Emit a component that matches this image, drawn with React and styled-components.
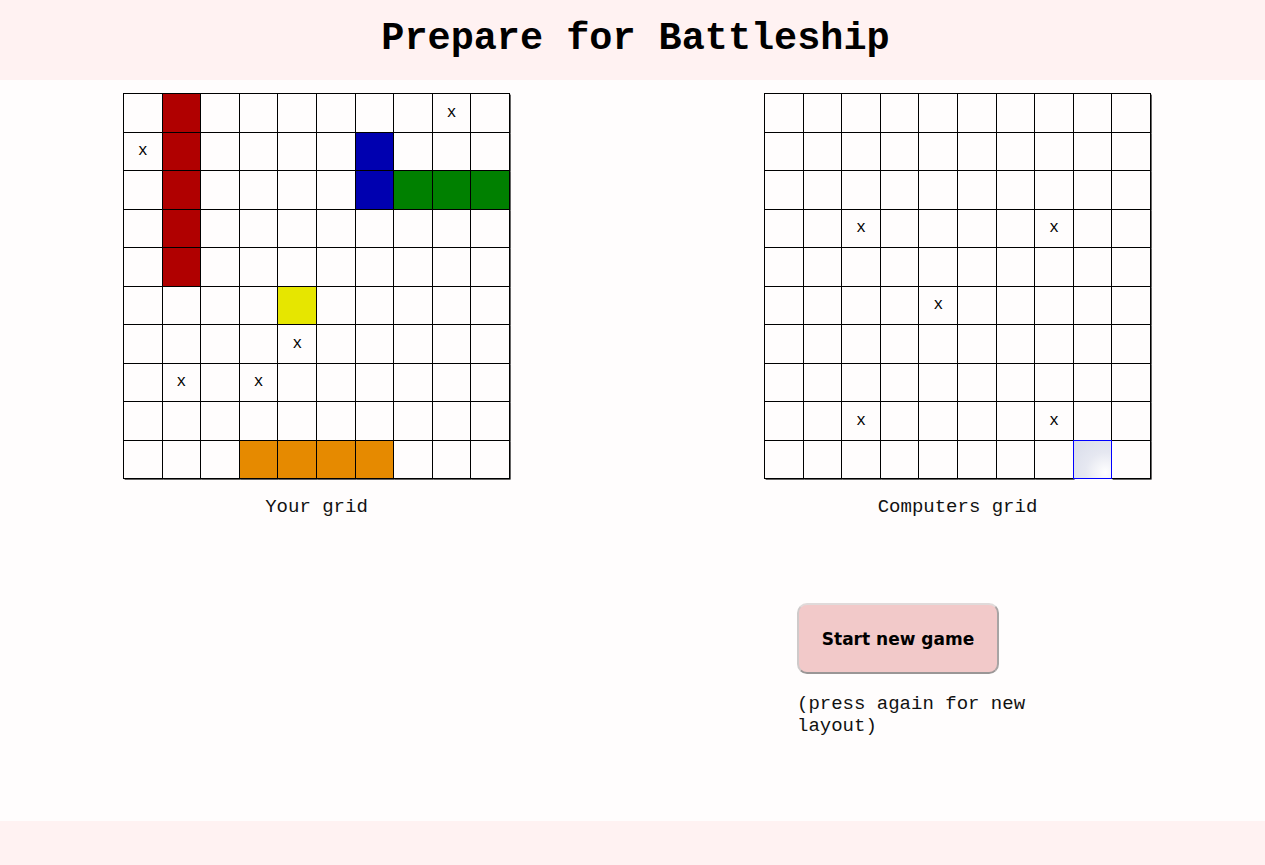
import React, { useState } from 'react';
import styled, { createGlobalStyle } from 'styled-components';

const GlobalStyle = createGlobalStyle`
  html, body {
    margin: 0;
    padding: 0;
    background: #fffdfd;
  }
`;

const Page = styled.div`
  min-height: 100vh;
  display: flex;
  flex-direction: column;
  font-family: 'Liberation Mono', 'Courier New', monospace;
  color: #111;
`;

const Header = styled.header`
  height: 80px;
  background: #fff2f2;
  display: flex;
  align-items: center;
  justify-content: center;
`;

const Title = styled.h1`
  margin: -3px 0 0 6px;
  font-size: 38.5px;
  font-weight: bold;
  color: #000;
`;

const Main = styled.main`
  flex: 1;
  display: flex;
  gap: 254px;
  padding: 13px 0 0 123px;
`;

const Column = styled.section`
  display: flex;
  flex-direction: column;
  width: 387px;
`;

const Board = styled.div`
  display: grid;
  grid-template-columns: repeat(10, 1fr);
  grid-template-rows: repeat(10, 1fr);
  width: 387px;
  height: 386px;
  border-top: 1px solid #000;
  border-left: 1px solid #000;
  box-sizing: border-box;
`;

const Cell = styled.div`
  border-right: 1px solid #000;
  border-bottom: 1px solid #000;
  box-shadow: 0.6px 0.6px 0 0 #000;
  background: ${(p) => p.$color || '#fffdfd'};
  display: flex;
  align-items: center;
  justify-content: center;
  font-size: 16px;
  color: #000;
  box-sizing: border-box;
  cursor: ${(p) => (p.$target ? 'pointer' : 'default')};
  ${(p) =>
    p.$hover &&
    `
    position: relative;
    z-index: 1;
    box-shadow: none;
    border: 1px solid #0000ff;
    margin: -1px 0 0 -1px;
    background: radial-gradient(circle at 85% 85%, #ffffff 0%, #e6e8f1 45%, #d8dcea 100%);
  `}
`;

const Caption = styled.p`
  margin: 17px 0 0;
  text-align: center;
  font-size: 19px;
  line-height: 22px;
`;

const Controls = styled.div`
  margin: 85px 0 0 33px;
  display: flex;
  flex-direction: column;
  align-items: flex-start;
`;

const StartButton = styled.button`
  width: 202px;
  height: 71px;
  background: #f2c9c9;
  border: 2px solid;
  border-color: #e0dada #a8a4a4 #9a9696 #cfcaca;
  border-radius: 10px;
  font-family: 'DejaVu Sans', Verdana, sans-serif;
  font-weight: bold;
  font-size: 17px;
  color: #000;
  cursor: pointer;
`;

const Note = styled.p`
  margin: 19px 0 0;
  width: 240px;
  font-size: 19px;
  line-height: 22px;
`;

const Footer = styled.footer`
  height: 44px;
  background: #fff2f2;
`;

const COLORS = {
  r: '#b00000',
  b: '#0000b0',
  g: '#008000',
  y: '#e6e600',
  o: '#e68a00',
};

const playerShips = {
  '0-1': 'r', '1-1': 'r', '2-1': 'r', '3-1': 'r', '4-1': 'r',
  '1-6': 'b', '2-6': 'b',
  '2-7': 'g', '2-8': 'g', '2-9': 'g',
  '5-4': 'y',
  '9-3': 'o', '9-4': 'o', '9-5': 'o', '9-6': 'o',
};

const playerShots = ['0-8', '1-0', '6-4', '7-1', '7-3'];
const computerShots = ['3-2', '3-7', '5-4', '8-2', '8-7'];

const cells = Array.from({ length: 100 }, (_, i) => `${Math.floor(i / 10)}-${i % 10}`);

const App = () => {
  const [hover, setHover] = useState('9-8');

  return (
    <Page>
      <GlobalStyle />
      <Header>
        <Title>Prepare for Battleship</Title>
      </Header>
      <Main>
        <Column>
          <Board>
            {cells.map((key) => (
              <Cell key={key} $color={COLORS[playerShips[key]]}>
                {playerShots.includes(key) ? 'x' : ''}
              </Cell>
            ))}
          </Board>
          <Caption>Your grid</Caption>
        </Column>
        <Column>
          <Board>
            {cells.map((key) => (
              <Cell
                key={key}
                $target
                $hover={hover === key}
                onMouseEnter={() => setHover(key)}
              >
                {computerShots.includes(key) ? 'x' : ''}
              </Cell>
            ))}
          </Board>
          <Caption>Computers grid</Caption>
          <Controls>
            <StartButton>Start new game</StartButton>
            <Note>(press again for new layout)</Note>
          </Controls>
        </Column>
      </Main>
      <Footer />
    </Page>
  );
};

export default App;
